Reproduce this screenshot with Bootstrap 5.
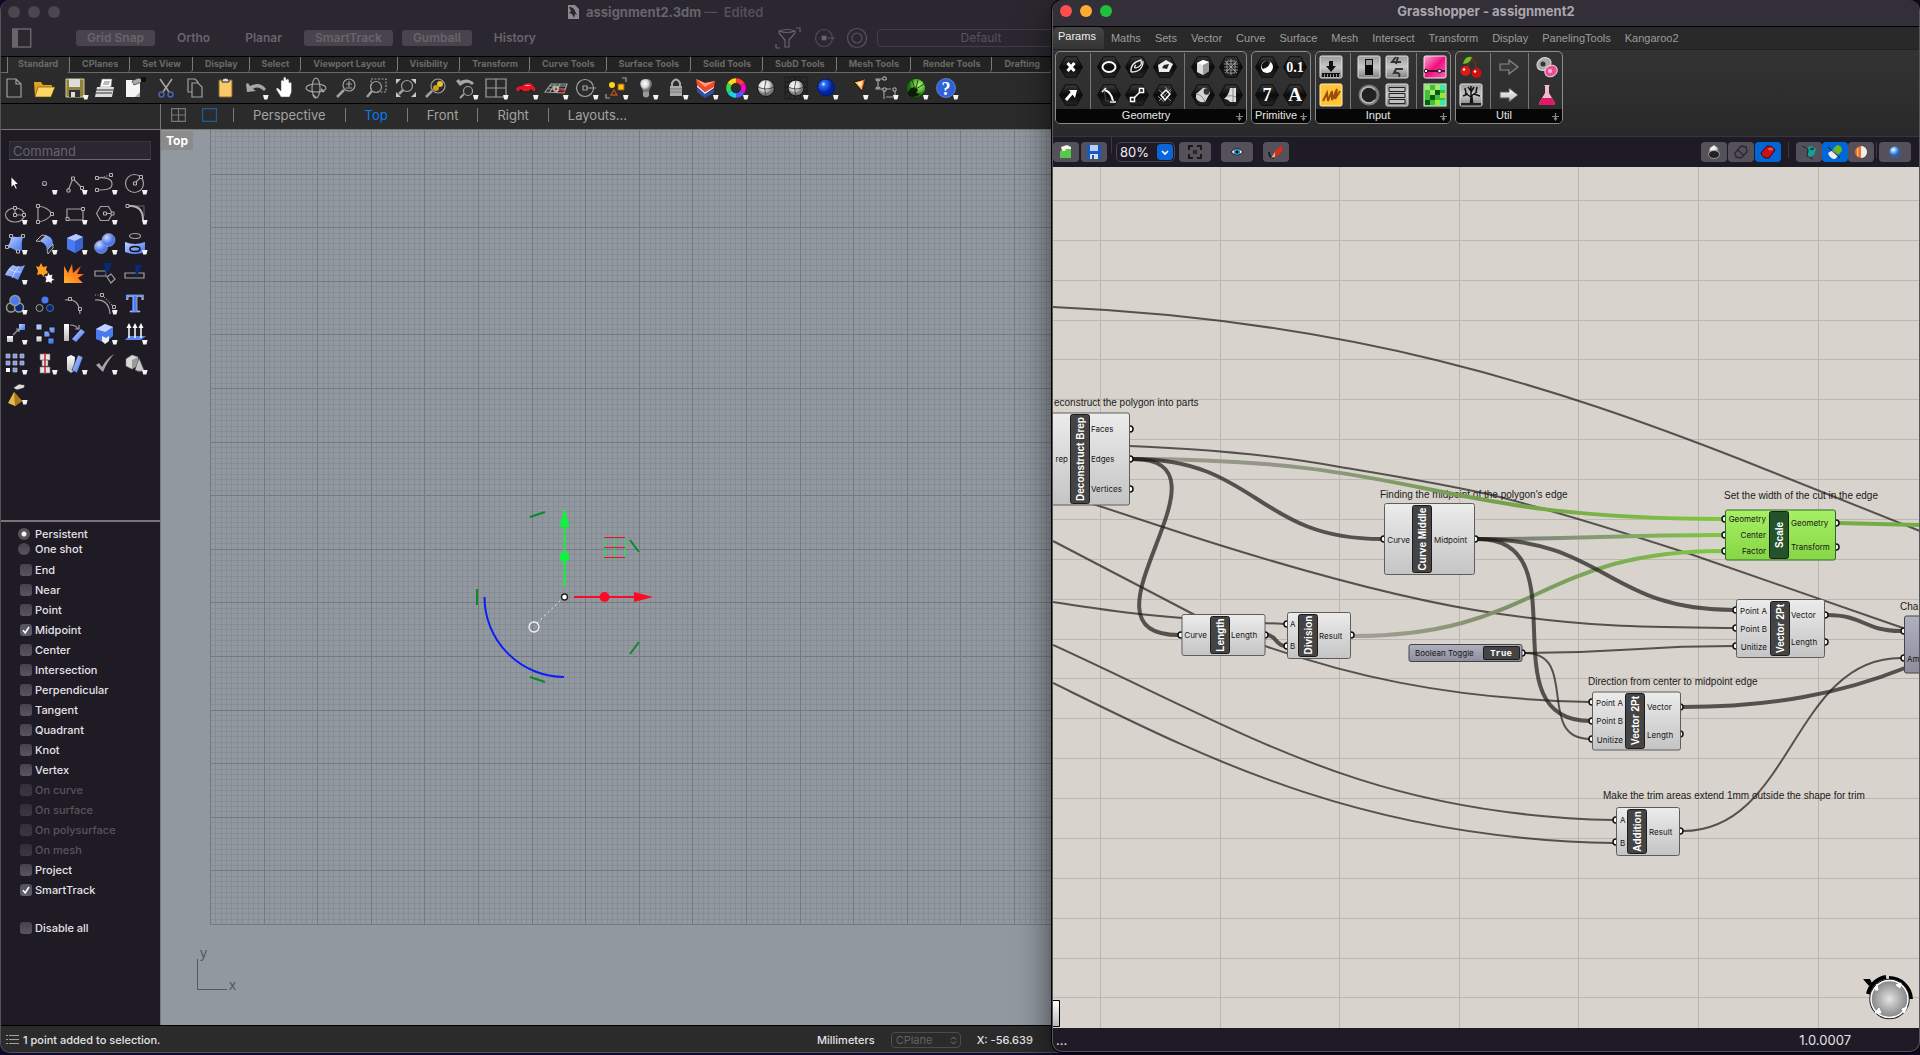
<!DOCTYPE html>
<html lang="en" data-bs-theme="dark">
<head>
<meta charset="utf-8">
<meta name="viewport" content="width=device-width, initial-scale=1">
<title>Grasshopper - assignment2</title>
<link href="https://cdn.jsdelivr.net/npm/bootstrap@5.3.0/dist/css/bootstrap.min.css" rel="stylesheet">
<style>
:root{--ui:Inter,"Noto Sans",sans-serif;--gh:"Liberation Sans",Arial,sans-serif}
body{background:#120a2c;font-family:var(--ui);font-size:12px;line-height:16px;color:#e4e2e6}
button,select,input{font-family:inherit}
.desk{height:100vh;min-height:700px}
.win{position:absolute;top:0;bottom:3px;border-radius:10px}
.win-rhino{left:0;width:56%;bottom:2px;border-left:1px solid #55535a;border-bottom:1px solid #55535a;background:#2b2b2b}
.win-gh{left:1052px;right:0;border:1px solid #57555c;border-top:0;background:#1f1b26;box-shadow:0 0 0 1px #000,0 12px 34px rgba(0,0,0,.62)}
.plain{background:none;border:0;padding:0;color:inherit;display:block}
svg{display:block;flex:none}
/* Rhino header */
.r-head{background:#2b2730;height:57px;border-bottom:1px solid #000;color:#67646c}
.r-title{height:24px;font-size:13px;font-weight:700}
.r-title .edited{font-weight:600;color:#53505a}
.lights{gap:8px;padding-left:7px}
.dot{width:12px;height:12px;border-radius:50%;background:#4b4750}
.dot.close-dot{background:#fe4f4b}
.dot.min-dot{background:#fdab33}
.dot.max-dot{background:#1fc13c}
.r-title .name{left:566px;gap:7px}
.r-bar{height:27px;padding-left:11px;font-size:12px;font-weight:600;gap:9px}
.side-btn{margin-right:35px}
.snap{height:16px;line-height:14px;padding:0 13px;border:0;border-radius:3px;background:none;color:#67646c;font-weight:600}
.snap.on{background:#47444d;padding:0 11px}
.pick{appearance:none;background:none;border:1px solid #413e47;border-radius:4px;color:#56535b;height:18px;font-size:12px;line-height:14px;padding:0 6px}
.pick-default{width:208px;text-align:center;text-align-last:center}
.r-icons{left:774px;gap:10px}
.r-icons .g{stroke:#67646c}
/* tool tabs */
.tabs{height:16px;background:#232323;font-size:9px;font-weight:700;line-height:14px;border-bottom:1px solid #6a6a6a;padding-left:6px}
.tabs a{color:#6a6a6a;text-decoration:none;padding:0 11px 0 12px;border-right:1px solid #7a7a7a;border-radius:0 0 3px 0;white-space:nowrap;height:15px}
.tabs a.on{background:#2c2c2c;height:16px;border-left:1px solid #7a7a7a;padding-left:10px}
.tools{height:31px;background:#2b2b2b;border-bottom:1px solid #000}
.tool{width:30px;height:30px;flex:none}
/* views */
.views{height:26px;border-bottom:1px solid #777;background:#2b2b2b}
.views-gap{width:159px}
.views-nav{border-left:1px solid #777;font-size:13px;color:#a3a3a3;padding-left:10px}
.views-nav a{color:inherit;text-decoration:none;padding:0 19px;line-height:14px;border-left:1px solid #7b7b7b;white-space:nowrap}
.views-nav a.on{color:#0a7cf0}
.views-nav a.on,.views-nav a.on+a{border-color:#7b7b7b}
.side{width:160px;background:#1f1b25;border-right:1px solid #777}
.cmd{height:19px;margin:11px 9px 8px 8px;background:#2a2731;border:1px solid #37343e;border-bottom-color:#6b6870;color:#ddd;font-size:13px;padding:0 3px;border-radius:0}
.cmd::placeholder{color:#65626a}
.palette{margin-left:-1px;height:354px;border-bottom:2px solid #77757a;align-content:flex-start}
.snaps{padding-top:4px;font-size:11px;font-weight:500}
.snaps .opt{padding-left:19px;gap:3px;height:20px}
.snaps .rad{padding-left:17px;gap:5px;height:15px}
.snaps .last{margin-top:18px}
.snaps input{appearance:none;width:12px;height:12px;margin:0;border-radius:3px;background:linear-gradient(#45424b,#58555e);flex:none}
.snaps input[type=radio]{border-radius:50%}
.snaps input[type=radio]:checked{background:radial-gradient(circle,#f4f4f4 0 2px,#55525b 3px)}
.snaps input[type=checkbox]:checked{background:url("data:image/svg+xml,%3Csvg xmlns='http://www.w3.org/2000/svg' viewBox='0 0 12 12'%3E%3Cpath d='M3 6.3L5.2 9 9 3' fill='none' stroke='white' stroke-width='1.6'/%3E%3C/svg%3E"),linear-gradient(#55525b,#62606a)}
.snaps .off{color:#57545c}
.snaps .off input{opacity:.5}
.vp{background:#9198a0}
.vp-name{top:1px;left:0;background:#8b8b8b;color:#fff;font-weight:700;font-size:12px;line-height:19px;padding:0 5px}
.r-status{height:27px;border-top:1px solid #000;background:#2b2b2b;font-size:11px;font-weight:500;padding:1px 0 0 5px}
.r-status .grp{position:absolute;left:816px;gap:16px}
.r-status .pick{width:70px;height:16px;font-size:11px;line-height:12px;border-color:#4c4c4c;color:#626262;padding:0 4px}
/* Grasshopper */
.g-title{height:27px;background:#332f38;border-bottom:1px solid #000;border-radius:10px 10px 0 0;font-size:13px;font-weight:700;color:#a9a7ad}
.g-title .lights{position:absolute;left:0}
.g-tabs{height:22px;background:#292929;font-family:var(--gh);font-size:11px;color:#9d9d9d}
.g-tabs a{color:inherit;text-decoration:none;padding:0 7px;line-height:22px;border-radius:6px 6px 0 0}
.g-tabs a.on{background:linear-gradient(#454545,#343434);color:#eee;padding:0 8px 0 5px;line-height:18px}
.ribbon{height:88px;background:linear-gradient(#333,#292929);border-top:1px solid #222;border-bottom:1px solid #38363c;padding:1px 2px;gap:4px}
.panel-box{height:73px;border:1px solid #8b8b8b;border-radius:5px;overflow:hidden;background:linear-gradient(#333,#2c2c2c)}
.panel-box .cells{height:57px;padding:1px 1px 0}
.panel-box .colm{width:28px}
.panel-box .rule{width:10px;background:linear-gradient(90deg,transparent 5px,#777 5px 6px,transparent 6px)}
.panel-box .cap{height:14px;background:#060606;font-family:var(--gh);font-size:11px;line-height:13px;color:#e6e6e6;text-align:center;padding-right:10px}
.panel-box .cap svg{right:2px;top:3px}
.g-bar{height:30px}
.gb{height:20px;width:26px;border-radius:4px;background:#54515a;display:flex;align-items:center;justify-content:center;border:0;padding:0}
.gb.wide{width:32px}
.gb.on{background:#0068d6}
.near-btns{gap:1px}
.left-btns{gap:2px}
.mid-btns{gap:10px}
.vr{width:1px;height:16px;background:#3b3842;opacity:1;margin:0 4px}
.vr.v-far{margin:0 7px}
.vr.v-near{margin:0 2px}
.zoomer{width:59px;height:20px;border:1px solid #46434c;border-radius:5px;margin-right:4px}
.zoomer select{appearance:none;background:none;border:0;color:#eee;font-size:13px;line-height:18px;padding:0 0 0 3px;width:57px;height:18px}
.zoomer svg{right:1px;top:1px}
.g-canvas{background:#d8d3cc}
.g-status{height:23px;font-size:13px;padding:0 68px 0 3px}
/* drawing classes */
.g{fill:none;stroke:#a0a0a0;stroke-width:1.2}
.sq{fill:#1f1b25;stroke:#b5b5b5;stroke-width:1}
.wire{fill:none;stroke:#1c1a18;stroke-opacity:.7;stroke-width:2}
.thick{stroke-width:4}
.note text{font-family:var(--gh);font-size:10px;fill:#1a1a1a}
.lab text{font-family:var(--ui);font-size:8px;fill:#161616}
.lab .e{text-anchor:end}
.pill text{font-family:var(--gh);font-weight:700;font-size:10px;fill:#fff;text-anchor:middle}
.pill .value{font-family:"Liberation Mono",monospace;font-size:9px}
.node-body rect{fill:url(#nodeFill);stroke:#5d5d5d;stroke-width:1}
.pill rect{fill:#444;stroke:#1c1c1c}
.pill .leaf{fill:#24522a}
.ports circle{fill:#fff;stroke:#111;stroke-width:1.5}
</style>
<script src="https://cdn.jsdelivr.net/npm/bootstrap@5.3.0/dist/js/bootstrap.bundle.min.js"></script>
</head>
<body>
<svg width="0" height="0" class="position-absolute" aria-hidden="true">
<defs>
<linearGradient id="nodeFill" x2="0" y2="1"><stop stop-color="#ececec"/><stop offset="1" stop-color="#c4c4c4"/></linearGradient>
<linearGradient id="greenFill" x2="0" y2="1"><stop stop-color="#a6f065"/><stop offset="1" stop-color="#87d645"/></linearGradient>
<linearGradient id="slateFill" x2="0" y2="1"><stop stop-color="#b0b0c0"/><stop offset="1" stop-color="#8c8c9c"/></linearGradient>
<linearGradient id="wireGreen" gradientUnits="userSpaceOnUse" x1="1133" x2="1723"><stop stop-color="#9c9a90"/><stop offset=".25" stop-color="#929588"/><stop offset=".6" stop-color="#74a04c"/><stop offset="1" stop-color="#7ec83f"/></linearGradient>
<linearGradient id="wireGreen2" gradientUnits="userSpaceOnUse" x1="1353" x2="1723"><stop stop-color="#a3a198"/><stop offset=".4" stop-color="#7f9068"/><stop offset="1" stop-color="#7ec83f"/></linearGradient>
<linearGradient id="wireGreen3" gradientUnits="userSpaceOnUse" x1="1478" x2="1723"><stop stop-color="#77756e"/><stop offset=".4" stop-color="#86947a"/><stop offset="1" stop-color="#7ec83f"/></linearGradient>
<linearGradient id="blue" x2="1" y2="1"><stop stop-color="#c3d3ff"/><stop offset="1" stop-color="#3c6ff0"/></linearGradient>
<linearGradient id="white" x2="0" y2="1"><stop stop-color="#fff"/><stop offset="1" stop-color="#b8b8b8"/></linearGradient>
<linearGradient id="steel" x2="0" y2="1"><stop stop-color="#9a9a9a"/><stop offset=".5" stop-color="#c8c8c8"/><stop offset="1" stop-color="#808080"/></linearGradient>
<linearGradient id="fire" x1="0" y1="1" x2="1" y2="0"><stop stop-color="#ffb32e"/><stop offset="1" stop-color="#ff4a10"/></linearGradient>
<linearGradient id="hexFill" x2="0" y2="1"><stop stop-color="#3b3b3b"/><stop offset=".5" stop-color="#0a0a0a"/><stop offset="1" stop-color="#262626"/></linearGradient>
<linearGradient id="pink" x2="1" y2="1"><stop stop-color="#ffa9d4"/><stop offset=".5" stop-color="#f0107c"/><stop offset="1" stop-color="#ff5fc0"/></linearGradient>
<radialGradient id="ballW" cx=".4" cy=".35"><stop stop-color="#fff"/><stop offset=".6" stop-color="#d8d8d8"/><stop offset="1" stop-color="#777"/></radialGradient>
<radialGradient id="ballB" cx=".35" cy=".3"><stop stop-color="#fff"/><stop offset=".25" stop-color="#2f73ff"/><stop offset="1" stop-color="#0022a0"/></radialGradient>
<radialGradient id="ballL" cx=".35" cy=".3"><stop stop-color="#fff"/><stop offset=".5" stop-color="#6fb3ff"/><stop offset="1" stop-color="#2b5fb0"/></radialGradient>
<radialGradient id="ballM" cx=".35" cy=".3"><stop stop-color="#c9d8ff"/><stop offset="1" stop-color="#4a78ee"/></radialGradient>
<radialGradient id="ballG" cx=".65" cy=".35"><stop stop-color="#b6f27a"/><stop offset=".7" stop-color="#4fae2c"/><stop offset="1" stop-color="#1d6a14"/></radialGradient>
<radialGradient id="knob"><stop stop-color="#e4e4e4"/><stop offset="1" stop-color="#808080"/></radialGradient>
<path id="dd" d="M22 22h5.6l-1.2 4.6h-3.2z" fill="#f2f2f2"/>
<path id="hex" d="M2.500 14L8.500 3.800H19.500L25.500 14L19.500 24.200H8.500z" fill="url(#hexFill)" stroke="#0a0a0a"/>
<rect id="tile" x="3" y="3" width="22" height="22" rx="1.500" fill="url(#steel)" stroke="#e4e4e4"/>
<path id="plus" d="M4.500 1v7M1 4.500h7M3 6l1.500 2L6 6" fill="none" stroke="#888" stroke-width="1.200"/>
</defs>
</svg>

<main class="desk position-relative overflow-hidden">

<!-- Rhino window -->
<section class="win win-rhino d-flex flex-column overflow-hidden">
<header class="r-head flex-shrink-0">
 <div class="r-title d-flex align-items-center position-relative">
  <div class="lights d-flex"><span class="dot"></span><span class="dot"></span><span class="dot"></span></div>
  <div class="name position-absolute d-flex align-items-center">
   <svg width="12" height="14" viewBox="0 0 12 14"><path d="M1 0h7l4 4v10H1z" fill="#8b898e"/><path d="M2 2c3 0 5 1 6 4l2 4-2-1-1 4-2-4-3-1 2-2z" fill="#2a272e"/></svg>
   <span class="text-nowrap">assignment2.3dm <span class="edited">—&nbsp; Edited</span></span>
  </div>
 </div>
 <div class="r-bar d-flex align-items-center position-relative">
  <button class="plain side-btn" aria-label="Toggle sidebar"><svg width="20" height="20" viewBox="0 0 20 20"><rect x=".7" y="1" width="18" height="18" fill="none" stroke="#67646c" stroke-width="1.500"/><path d="M1 1h5v18H1z" fill="#67646c"/></svg></button>
  <button class="snap on">Grid Snap</button><button class="snap">Ortho</button><button class="snap">Planar</button><button class="snap on">SmartTrack</button><button class="snap on">Gumball</button><button class="snap">History</button>
  <div class="r-icons position-absolute d-flex align-items-center">
   <svg width="28" height="24" viewBox="0 0 28 24" class="g"><path d="M4 5q8-3 16 0v2l-6 7v7h-4v-7L4 7zM4 5q8 3 16 0M21 2h4v4M1 18v4h4"/></svg>
   <svg width="22" height="22" viewBox="0 0 22 22" class="g" stroke-opacity=".6"><circle cx="11" cy="11" r="8.500"/><path d="M9 9h4v4H9z" fill="#67646c"/><path d="M11 11h11"/></svg>
   <svg width="22" height="22" viewBox="0 0 22 22" class="g" stroke-opacity=".7"><circle cx="12" cy="11" r="9.500"/><circle cx="12" cy="11" r="5"/></svg>
   <select class="pick pick-default" aria-label="Layer"><option>Default</option></select>
  </div>
 </div>
</header>
<nav class="tabs d-flex flex-shrink-0" aria-label="Toolbars">
<a class="on" href="#">Standard</a><a href="#">CPlanes</a><a href="#">Set View</a><a href="#">Display</a><a href="#">Select</a><a href="#">Viewport Layout</a><a href="#">Visibility</a><a href="#">Transform</a><a href="#">Curve Tools</a><a href="#">Surface Tools</a><a href="#">Solid Tools</a><a href="#">SubD Tools</a><a href="#">Mesh Tools</a><a href="#">Render Tools</a><a href="#">Drafting</a>
</nav>
<div class="tools d-flex flex-shrink-0">
<button class="plain tool" aria-label="New"><svg viewBox="0 0 30 30"><path class="g" d="M6 6h9l5 5v13H6zM15 6v5h5"/></svg></button>
<button class="plain tool" aria-label="Open"><svg viewBox="0 0 30 30"><path d="M3 9h7l2 3h9v4l-3 8H4z" fill="#e3a21c"/><path d="M7 14h17l-4 10H4z" fill="#ffd766" stroke="#5a3d00" stroke-width=".6"/></svg></button>
<button class="plain tool" aria-label="Save"><svg viewBox="0 0 30 30"><path d="M5 6h18v18H5z" fill="#8f8240" stroke="#e7dca0" stroke-width=".9"/><path d="M8 6h11v8H8z" fill="#ddd"/><path d="M8 17h11v7H8z" fill="#333"/><path d="M10 19h4v5h-4z" fill="#ddd"/><use href="#dd"/></svg></button>
<button class="plain tool" aria-label="Print"><svg viewBox="0 0 30 30"><path d="M11 6h10l-1 8H9z" fill="#fff" stroke="#777" stroke-width=".6"/><path d="M6 14h17l-2 10H4z" fill="#ddd"/><path d="M5 17h17M5 20h16" stroke="#333" stroke-width="1.200"/><path d="M13 9h6M12 11h6" stroke="#777"/></svg></button>
<button class="plain tool" aria-label="Properties"><svg viewBox="0 0 30 30"><path d="M5 7h14v17H5z" fill="#f5f5f5"/><path d="M11 8l6-3 4 1v3l-8 3z" fill="#aaa" stroke="#222" stroke-width=".6"/><path d="M20 4h5v5h-5z" fill="#111"/><path d="M14 24l5-5v5z" fill="#aaa"/></svg></button>
<button class="plain tool" aria-label="Cut"><svg viewBox="0 0 30 30"><path d="M9 6l9 13M21 6l-9 13" stroke="#aaa" stroke-width="1.500"/><g fill="none" stroke="#4b63b0" stroke-width="1.500"><circle cx="10.500" cy="21.500" r="2.500"/><circle cx="19.500" cy="21.500" r="2.500"/></g></svg></button>
<button class="plain tool" aria-label="Copy"><svg viewBox="0 0 30 30"><path class="g" d="M7 6h7l3 3v10H7z"/><path d="M11 10h6l4 4v10H11z" fill="#2b2b2b" stroke="#a0a0a0" stroke-width="1.200"/></svg></button>
<button class="plain tool" aria-label="Paste"><svg viewBox="0 0 30 30"><rect x="8" y="7" width="13" height="17" rx="1" fill="#f7c968" stroke="#8d6a22"/><path d="M11 9V7q3.500-4 7 0v2z" fill="#ddd" stroke="#222"/></svg></button>
<button class="plain tool" aria-label="Undo"><svg viewBox="0 0 30 30"><path d="M5 11l1 8 9-1-3-2q5-4 11 2l2-2q-6-8-16-3l-2-3z" fill="#a6a6a6"/><use href="#dd"/></svg></button>
<button class="plain tool" aria-label="Pan"><svg viewBox="0 0 30 30"><path d="M10 24l-5-8q1-2 3 0l2 2V8q1-2 2.500 0V5q1.500-2 2.500 0v2q1.500-2 3 0v3q1.500-1.500 2.500 0v9l-2 5z" fill="#fff" stroke="#555" stroke-width=".5"/></svg></button>
<button class="plain tool" aria-label="Rotate view"><svg viewBox="0 0 30 30" class="g"><ellipse cx="15" cy="15" rx="10" ry="4"/><ellipse cx="15" cy="15" rx="4" ry="10"/><path d="M20 16l3 3M12 22l3 3" stroke-width="2"/></svg></button>
<button class="plain tool" aria-label="Zoom dynamic"><svg viewBox="0 0 30 30" class="g"><circle cx="18" cy="12" r="6"/><path d="M13 17l-7 7" stroke-width="2.500"/><path d="M15 11h6M18 8v6M15 15h6"/></svg></button>
<button class="plain tool" aria-label="Zoom window"><svg viewBox="0 0 30 30" class="g"><path d="M10 6h15v13H10z" stroke-dasharray="2 1.500"/><circle cx="15" cy="14" r="5.500"/><path d="M11 18l-5 6" stroke-width="2.500"/></svg></button>
<button class="plain tool" aria-label="Zoom extents"><svg viewBox="0 0 30 30" class="g"><circle cx="16" cy="13" r="5.500"/><path d="M12 17l-4 4" stroke-width="2.500"/><path d="M5 6h5l-5 5zM25 6v5l-5-5zM25 24h-5l5-5zM5 24v-5l5 5z" fill="#c9c9c9" stroke="none"/></svg></button>
<button class="plain tool" aria-label="Zoom selected"><svg viewBox="0 0 30 30"><g class="g"><circle cx="17" cy="13" r="7"/><path d="M11 18l-6 6" stroke-width="2.500"/></g><circle cx="19" cy="11" r="3" fill="#e8c22e"/><circle cx="15" cy="15" r="3" fill="#c9a11a"/></svg></button>
<button class="plain tool" aria-label="Undo view"><svg viewBox="0 0 30 30"><path d="M5 8l4 5 3-2q5-3 9 1l2-2q-6-6-14-2L8 6z" fill="#a6a6a6"/><g class="g"><circle cx="17" cy="18" r="4.500"/><path d="M13 21l-4 4" stroke-width="2"/></g><use href="#dd"/></svg></button>
<button class="plain tool" aria-label="Four views"><svg viewBox="0 0 30 30"><path class="g" d="M5 6h20v18H5zM15 6v18M5 15h20"/><use href="#dd"/></svg></button>
<button class="plain tool" aria-label="Shade"><svg viewBox="0 0 30 30"><path d="M5 16q1-3 6-3 3-3 7-3 3 0 4 3 3 1 2 5H6z" fill="#e81423"/><path d="M13 13q4-2 7 0z" fill="#ffc4c4"/><circle cx="10" cy="18" r="1.700" fill="#222"/><circle cx="20" cy="18" r="1.700" fill="#222"/><use href="#dd"/></svg></button>
<button class="plain tool" aria-label="CPlane"><svg viewBox="0 0 30 30"><path class="g" stroke-width=".8" d="M4 19l6-8h16l-3 9zM9 19l5-8M15 20l4-9M6 16h18M8 13h17"/><path d="M15 15l-1-4" stroke="#2a2"/><path d="M15 16l9 2" stroke="#e11" stroke-width="1.500"/><path d="M13 14h4v4h-4z" fill="none" stroke="#eee"/><use href="#dd"/></svg></button>
<button class="plain tool" aria-label="Object snap"><svg viewBox="0 0 30 30"><g class="g"><circle cx="14" cy="15" r="8.500"/><path d="M12 13h4v4h-4zM16 15h9"/></g><use href="#dd"/></svg></button>
<button class="plain tool" aria-label="Select"><svg viewBox="0 0 30 30"><circle cx="11" cy="12" r="3" fill="#ffd21a"/><path d="M17 11h6v6h-6z" fill="#ffc21a" stroke="#965b00"/><path d="M10 22l3-5 3 5z" fill="none" stroke="#b5501a" stroke-width="1.300"/><path class="g" d="M21 5h4v4M5 21v4h4"/><use href="#dd"/></svg></button>
<button class="plain tool" aria-label="Show"><svg viewBox="0 0 30 30"><path d="M12 19q0-3-2-5-3-8 5-8t5 8q-2 2-2 5z" fill="url(#ballW)"/><path d="M12 19h6v4q-3 3-6 0z" fill="#999"/><use href="#dd"/></svg></button>
<button class="plain tool" aria-label="Lock"><svg viewBox="0 0 30 30"><path d="M11 14v-4q4-7 8 0v4" fill="none" stroke="#aaa" stroke-width="2"/><rect x="9" y="13" width="12" height="10" fill="#aaa"/><path d="M9 16h12M9 19h12" stroke="#777"/><use href="#dd"/></svg></button>
<button class="plain tool" aria-label="Layers"><svg viewBox="0 0 30 30"><path d="M6 15l9 6 8-5v4l-9 5-8-6z" fill="#2c50a8"/><path d="M6 12l8 7 9-6v2l-9 6-8-7z" fill="#e8eefc"/><path d="M5 6l9 4 10-2-1 6-9 5-8-7z" fill="#f04a28"/><path d="M5 6l9 4 10-2-10 6z" fill="#ff9a80"/><use href="#dd"/></svg></button>
<button class="plain tool" aria-label="Colour"><svg viewBox="0 0 30 30"><g fill="none" stroke-width="4.500"><path d="M15 7.500a7.500 7.500 0 0 1 6.500 3.700" stroke="#ff3b2f"/><path d="M21.500 11.200a7.500 7.500 0 0 1 0 7.600" stroke="#f0c"/><path d="M21.500 18.800A7.500 7.500 0 0 1 15 22.500" stroke="#4a5cff"/><path d="M15 22.500a7.500 7.500 0 0 1-6.500-3.700" stroke="#1ad0f0"/><path d="M8.500 18.800a7.500 7.500 0 0 1 0-7.600" stroke="#2be04a"/><path d="M8.500 11.200A7.500 7.500 0 0 1 15 7.500" stroke="#ffd51a"/></g><use href="#dd"/></svg></button>
<button class="plain tool" aria-label="Shaded"><svg viewBox="0 0 30 30"><circle cx="15" cy="15" r="8.500" fill="url(#ballW)" stroke="#111"/><path d="M15 7q-3 8 0 16M7 14q8 4 16 0" fill="none" stroke="#333" stroke-width=".8"/></svg></button>
<button class="plain tool" aria-label="Render view"><svg viewBox="0 0 30 30"><path d="M4 4h22v22H4zM4 9h22M4 14h22M4 19h22M9 4v22M14 4v22M19 4v22" fill="none" stroke="#161616" stroke-width=".8"/><circle cx="15" cy="15" r="8" fill="url(#ballW)" stroke="#111"/><path d="M15 7q-3 8 0 16M7 14q8 4 16 0" fill="none" stroke="#333" stroke-width=".8"/><use href="#dd"/></svg></button>
<button class="plain tool" aria-label="Render"><svg viewBox="0 0 30 30"><circle cx="15" cy="14.500" r="8.500" fill="url(#ballB)" stroke="#001a66"/><use href="#dd"/></svg></button>
<button class="plain tool" aria-label="Spotlight"><svg viewBox="0 0 30 30"><path d="M13 9l11-3-3 12z" fill="#ffb04a" stroke="#111"/><path d="M16 10l6-2-2 6z" fill="#ffe9c0"/><path d="M22 7l2-1-3 12z" fill="#f0601a"/><use href="#dd"/></svg></button>
<button class="plain tool" aria-label="Dimension"><svg viewBox="0 0 30 30"><path class="g" d="M4 6h6M7 6v10M4 16h6M10 6h6M10 16h10M13 18v8M24 18v8M15 24h7M5 8l2-2 2 2M5 14l2 2 2-2"/><path class="sq" d="M12 4h3v3h-3zM12 15h3v3h-3zM22 15h3v3h-3z"/><use href="#dd"/></svg></button>
<button class="plain tool" aria-label="Grasshopper"><svg viewBox="0 0 30 30"><circle cx="15" cy="15" r="9.500" fill="url(#ballG)" stroke="#0f3a08"/><path d="M7 19l3-4 4-1 3 3-2 3 4 1-3 2-5 1-4-2z" fill="#0a1a06"/><path d="M14 16L11 7M15 16l8-5M15 15l2-8" stroke="#1a4a0c" fill="none"/><use href="#dd"/></svg></button>
<button class="plain tool" aria-label="Help"><svg viewBox="0 0 30 30"><circle cx="15" cy="15" r="9.500" fill="#2f62d8" stroke="#7ea2f5" stroke-width=".6"/><text x="15" y="21.500" text-anchor="middle" font-family="Liberation Serif,serif" font-weight="700" font-size="18" fill="#fff">?</text><use href="#dd"/></svg></button>
</div>
<div class="d-flex flex-shrink-0 views">
 <div class="flex-shrink-0 views-gap"></div>
 <nav class="views-nav d-flex align-items-center flex-fill pb-1" aria-label="Views">
  <button class="plain me-3" aria-label="All views"><svg width="15" height="14" viewBox="0 0 15 14" class="g"><path d="M.6.6h13.800v12.800H.6zM7.500 0v14M0 7h15" stroke="#777"/></svg></button>
  <button class="plain me-3" aria-label="Single view"><svg width="15" height="14" viewBox="0 0 15 14"><path d="M.6.6h13.800v12.800H.6z" fill="none" stroke="#1f5c9c" stroke-width="1.200"/></svg></button>
  <a href="#">Perspective</a><a class="on" href="#">Top</a><a href="#">Front</a><a href="#">Right</a><a href="#">Layouts...</a>
 </nav>
</div>
<div class="d-flex flex-fill overflow-hidden">
<aside class="side d-flex flex-column flex-shrink-0">
<input class="cmd" type="text" placeholder="Command" aria-label="Command">
<div class="palette d-flex flex-wrap flex-shrink-0">
<button class="plain tool" aria-label="Pointer"><svg viewBox="0 0 30 30"><path d="M11 8.500v11l2.600-2.200 2 4 1.800-.8-2-4h3.400z" fill="#fff" stroke="#000" stroke-width=".8"/></svg></button>
<button class="plain tool" aria-label="Point"><svg viewBox="0 0 30 30"><circle class="g" cx="14.500" cy="15.500" r="2"/><use href="#dd"/></svg></button>
<button class="plain tool" aria-label="Polyline"><svg viewBox="0 0 30 30"><path class="g" d="M8 22.500l5-12 9 9.500"/><path class="sq" d="M7 21h3v3H7zM11.500 9h3v3h-3zM20.500 18.500h3v3h-3z"/><use href="#dd"/></svg></button>
<button class="plain tool" aria-label="Curve"><svg viewBox="0 0 30 30"><path class="g" d="M7 10c7-1 15 0 15 6s-8 6-15 6"/><path class="g" stroke-dasharray="1 1.500" d="M9 10L21 7"/><path class="sq" d="M5.500 8.500h3v3h-3zM19.500 5.500h3v3h-3zM5.500 20.500h3v3h-3z"/><use href="#dd"/></svg></button>
<button class="plain tool" aria-label="Circle"><svg viewBox="0 0 30 30"><circle class="g" cx="14.500" cy="15.500" r="9"/><path class="g" d="M15 15l6-6"/><path class="sq" d="M13.500 14h3v3h-3zM19.500 7.500h3v3h-3z"/><use href="#dd"/></svg></button>
<button class="plain tool" aria-label="Ellipse"><svg viewBox="0 0 30 30"><ellipse class="g" cx="15" cy="17" rx="9.500" ry="7"/><path class="g" d="M15 10v7h9"/><path class="sq" d="M13.500 8.500h3v3h-3zM13.500 15.500h3v3h-3zM22.500 15.500h3v3h-3z"/><use href="#dd"/></svg></button>
<button class="plain tool" aria-label="Arc"><svg viewBox="0 0 30 30"><path class="g" d="M8 8q10 1 14 8-5 7-14 8z"/><path class="sq" d="M6.500 6.500h3v3h-3zM6.500 22.500h3v3h-3zM20.500 14.500h3v3h-3z"/><use href="#dd"/></svg></button>
<button class="plain tool" aria-label="Rectangle"><svg viewBox="0 0 30 30"><path class="g" d="M7 11h16v11H7z"/><path class="sq" d="M6 19.500h3v3H6zM21.500 9.500h3v3h-3z"/><use href="#dd"/></svg></button>
<button class="plain tool" aria-label="Polygon"><svg viewBox="0 0 30 30"><path class="g" d="M6.500 15.500l4-7h8l4 7-4 7h-8zM15 15.500h7"/><path class="sq" d="M13.500 14h3v3h-3zM21 14h3v3h-3z"/><use href="#dd"/></svg></button>
<button class="plain tool" aria-label="Fillet"><svg viewBox="0 0 30 30"><path d="M13 8h11v10" stroke="#66636b" fill="none"/><path d="M8 8h4q11 1 11 14" fill="none" stroke="#b0b0b0" stroke-width="2"/><path class="sq" d="M6 6.500h3v3H6z"/><use href="#dd"/></svg></button>
<button class="plain tool" aria-label="Surface"><svg viewBox="0 0 30 30"><path d="M11 8q6 2 12 0-2 7-1 14l-4 2q-5-4-11-5 4-5 4-11z" fill="url(#blue)"/><path class="sq" d="M9.500 6.500h3v3h-3zM21.500 6.500h3v3h-3zM5.500 17.500h3v3h-3zM16.500 22h3v3h-3z"/><use href="#dd"/></svg></button>
<button class="plain tool" aria-label="Sweep"><svg viewBox="0 0 30 30"><path d="M12 7q11 0 11 9l-6 6q-1-9-11-9z" fill="url(#blue)"/><path d="M12 7l4 .5-6 6-4-.5zM17 22l6-6v4l-5 6z" fill="#2b2b2b" stroke="#ccc" stroke-width=".8"/><use href="#dd"/></svg></button>
<button class="plain tool" aria-label="Box"><svg viewBox="0 0 30 30"><path d="M7 10l9-4 7 3v11l-8 5-8-4z" fill="#4a7af0"/><path d="M7 10l9-4 7 3-8 4z" fill="#b7caff"/><path d="M15 13l8-4v11l-8 5z" fill="#3a62d0"/><use href="#dd"/></svg></button>
<button class="plain tool" aria-label="Boolean"><svg viewBox="0 0 30 30"><circle cx="11" cy="19" r="6.500" fill="url(#ballM)" stroke="#aab" stroke-width=".6"/><circle cx="18.500" cy="12" r="6.500" fill="url(#ballM)" stroke="#aab" stroke-width=".6"/><use href="#dd"/></svg></button>
<button class="plain tool" aria-label="Project"><svg viewBox="0 0 30 30"><ellipse class="g" cx="15" cy="8" rx="5.500" ry="2.500"/><path d="M5 14q10 4 20 0v10q-10 4-20 0z" fill="url(#blue)"/><ellipse cx="15" cy="21" rx="5" ry="2.500" fill="none" stroke="#111" stroke-width="1.500"/><use href="#dd"/></svg></button>
<button class="plain tool" aria-label="Mesh"><svg viewBox="0 0 30 30"><path d="M5 17q3-7 8-10 6 3 12 0-4 9-7 15-6-4-13-5z" fill="url(#blue)"/><path d="M9 11q6 4 12 3M12 20q2-6 7-12" stroke="#dfe8ff" fill="none" stroke-width=".7"/><use href="#dd"/></svg></button>
<button class="plain tool" aria-label="Join"><svg viewBox="0 0 30 30"><path d="M6 8l3 1 2-4 2 4 4-1-1 4 3 3-4 1-1 3-3-3-4 1 1-4z" fill="#ff9d1c"/><path d="M14 17l3 1 1-4 2 3 3-1-1 4 3 2-3 1 0 3-3-2-4 1 1-4z" fill="#fff" stroke="#1f1b25" stroke-width=".8"/></svg></button>
<button class="plain tool" aria-label="Explode"><svg viewBox="0 0 30 30"><path d="M4 25V8l4 7 4-9 1 9 8-7-4 8 7 0-6 4 5 5z" fill="url(#fire)"/></svg></button>
<button class="plain tool" aria-label="Trim"><svg viewBox="0 0 30 30"><path class="g" d="M5 13h11v5H5zM17 19l4-3 4 5-4 4z"/><path d="M14 5h8l-6 13z" fill="#052a78"/></svg></button>
<button class="plain tool" aria-label="Split"><svg viewBox="0 0 30 30"><path class="g" d="M5 15h19v5H5z"/><path d="M15 7h7l-6 13z" fill="#052a78"/></svg></button>
<button class="plain tool" aria-label="Group"><svg viewBox="0 0 30 30"><circle cx="11" cy="19.500" r="4.500" fill="#222" stroke="#999" stroke-width="1.500"/><circle cx="19" cy="19.500" r="4.500" fill="#062a78" stroke="#999" stroke-width="1.500"/><circle cx="15" cy="12.500" r="5" fill="#4a7af0" stroke="#999" stroke-width="1.500"/><use href="#dd"/></svg></button>
<button class="plain tool" aria-label="Ungroup"><svg viewBox="0 0 30 30"><circle cx="9.500" cy="20" r="3.500" fill="#222" stroke="#999"/><circle cx="20" cy="20" r="3.500" fill="#062a78" stroke="#55679a"/><circle cx="15" cy="12" r="3.500" fill="#4a7af0"/></svg></button>
<button class="plain tool" aria-label="Edit points"><svg viewBox="0 0 30 30"><path class="g" d="M5 12q14-3 15 14"/><path class="sq" d="M8.500 9.500h3v3h-3zM18.500 19.500h3v3h-3z"/></svg></button>
<button class="plain tool" aria-label="Control points"><svg viewBox="0 0 30 30"><path class="g" d="M5 12q14-1 15 14"/><path class="g" stroke-dasharray="1 1.500" d="M5 7h7l11 11"/><path class="sq" d="M10.500 5.500h3v3h-3zM22.500 17.500h3v3h-3z"/><use href="#dd"/></svg></button>
<button class="plain tool" aria-label="Text"><svg viewBox="0 0 30 30"><text x="15" y="24" text-anchor="middle" font-family="Liberation Serif,serif" font-weight="700" font-size="26" fill="#4a80f2" stroke="#c5d4ff" stroke-width=".6">T</text></svg></button>
<button class="plain tool" aria-label="Move"><svg viewBox="0 0 30 30"><path d="M7 18h6v6H7z" fill="url(#white)"/><path d="M19 6h6v6h-6z" fill="url(#blue)"/><path class="g" d="M13 17l6-6M16 11h3v3"/><use href="#dd"/></svg></button>
<button class="plain tool" aria-label="Copy objects"><svg viewBox="0 0 30 30"><g fill="url(#blue)" stroke="#111" stroke-width=".8"><path d="M6 6h6v6H6zM19 9h6v6h-6zM14 13h6v6h-6zM18 20h6v6h-6z"/><path d="M6 18h6v6H6z" fill="url(#white)"/></g></svg></button>
<button class="plain tool" aria-label="Rotate"><svg viewBox="0 0 30 30"><path d="M4 6h5v17H4z" fill="url(#white)"/><path d="M12 21l9-10 4 3-9 10z" fill="url(#blue)"/><path class="g" d="M10 7q6 0 8 4M15 11h4V7"/></svg></button>
<button class="plain tool" aria-label="Cap"><svg viewBox="0 0 30 30"><path d="M6 11l9-5 8 3v9l-8 7-9-4z" fill="#4a7af0"/><path d="M6 11l9-5 8 3-8 5z" fill="#c3d3ff"/><path d="M12 18l4 2 3-2v5l-4 3-3-3z" fill="#eee"/><use href="#dd"/></svg></button>
<button class="plain tool" aria-label="Extrude"><svg viewBox="0 0 30 30"><path d="M5 22l4-4h17l-5 4z" fill="#5b86f5"/><path d="M9 20V8M15 20V8M21 20V8" stroke="#fff" stroke-width="1.500"/><path d="M6.500 10L9 5l2.500 5zM12.500 10L15 5l2.500 5zM18.500 10L21 5l2.500 5z" fill="#fff"/><use href="#dd"/></svg></button>
<button class="plain tool" aria-label="Array"><svg viewBox="0 0 30 30"><path d="M6 6h4v4H6zM13 6h4v4h-4zM20 6h4v4h-4zM6 13h4v4H6zM13 13h4v4h-4zM20 13h4v4h-4zM13 20h4v4h-4z" fill="#7d9cf0" stroke="#ccc" stroke-width=".6"/><path d="M6 20h4v4H6z" fill="#fff"/><use href="#dd"/></svg></button>
<button class="plain tool" aria-label="Align"><svg viewBox="0 0 30 30"><path d="M10 6h10v6H10zM12 12h6v6h-6zM10 19h10v6H10z" fill="#e4e4e4" stroke="#777" stroke-width=".6"/><path d="M15 5v21" stroke="#d01c2c" stroke-width="1.500"/><use href="#dd"/></svg></button>
<button class="plain tool" aria-label="Bend"><svg viewBox="0 0 30 30"><path d="M7 9l4-2 4 2-1 14-3 2-4-3z" fill="url(#white)"/><path d="M18 7l5 2-6 16-5-3z" fill="url(#blue)" stroke="#222" stroke-width=".6"/><use href="#dd"/></svg></button>
<button class="plain tool" aria-label="Check"><svg viewBox="0 0 30 30"><path d="M6 17l3-2 3 4Q17 10 24 6q-7 8-11 18z" fill="#a4a4a4"/><use href="#dd"/></svg></button>
<button class="plain tool" aria-label="Primitives"><svg viewBox="0 0 30 30"><path d="M6 11l6-4 6 2v8l-6 4-6-3z" fill="#d8d8d8" stroke="#888" stroke-width=".5"/><path d="M12 12l6-3v8l-6 4z" fill="#9a9a9a"/><path d="M19 10l5 12q-4 3-9 0z" fill="#c6c6c6" stroke="#444" stroke-width=".5"/><use href="#dd"/></svg></button>
<button class="plain tool" aria-label="Pyramid"><svg viewBox="0 0 30 30"><path d="M14 14l8 9-7 5-7-3z" fill="#e4b84a"/><path d="M14 14l8 9-7 5z" fill="#a87a1c"/><path d="M13 10l6-4 6 1-1 3-7 2z" fill="#ddd" stroke="#111" stroke-width=".6"/><use href="#dd"/></svg></button>
</div>
<form class="snaps">
<label class="rad d-flex align-items-center"><input type="radio" name="m" checked>Persistent</label>
<label class="rad d-flex align-items-center mb-1"><input type="radio" name="m">One shot</label>
<label class="opt d-flex align-items-center"><input type="checkbox">End</label>
<label class="opt d-flex align-items-center"><input type="checkbox">Near</label>
<label class="opt d-flex align-items-center"><input type="checkbox">Point</label>
<label class="opt d-flex align-items-center"><input type="checkbox" checked>Midpoint</label>
<label class="opt d-flex align-items-center"><input type="checkbox">Center</label>
<label class="opt d-flex align-items-center"><input type="checkbox">Intersection</label>
<label class="opt d-flex align-items-center"><input type="checkbox">Perpendicular</label>
<label class="opt d-flex align-items-center"><input type="checkbox">Tangent</label>
<label class="opt d-flex align-items-center"><input type="checkbox">Quadrant</label>
<label class="opt d-flex align-items-center"><input type="checkbox">Knot</label>
<label class="opt d-flex align-items-center"><input type="checkbox">Vertex</label>
<label class="opt off d-flex align-items-center"><input type="checkbox" disabled>On curve</label>
<label class="opt off d-flex align-items-center"><input type="checkbox" disabled>On surface</label>
<label class="opt off d-flex align-items-center"><input type="checkbox" disabled>On polysurface</label>
<label class="opt off d-flex align-items-center"><input type="checkbox" disabled>On mesh</label>
<label class="opt d-flex align-items-center"><input type="checkbox">Project</label>
<label class="opt d-flex align-items-center"><input type="checkbox" checked>SmartTrack</label>
<label class="opt last d-flex align-items-center"><input type="checkbox">Disable all</label>
</form>
</aside>
<div class="vp flex-fill position-relative overflow-hidden">
 <svg class="position-absolute top-0 start-0" width="915" height="895" viewBox="161 130 915 895">
  <path id="minor" stroke="#868d95" fill="none"/><path id="major" stroke="#757a82" fill="none"/>
  <g stroke="#0a8a26" stroke-width="2"><path d="M530 517l15-5M630 540l9 12M477 589v16M630 654l9-12M530 677l15 5"/></g>
  <path d="M604.500 537v20M614.500 537v20M624.500 537v20" stroke="#0bf53c"/><path d="M604 537.500h21M604 547.500h21M604 557.500h21" stroke="#e8102c"/>
  <path d="M484.500 597A80 80 0 0 0 564 677" fill="none" stroke="#0a20f5" stroke-width="2"/>
  <path d="M564.500 587v-62" stroke="#0bf53c" stroke-width="2"/><path d="M564.500 508l5 19h-10z" fill="#0bf53c"/><circle cx="564.500" cy="557" r="5" fill="#0bf53c"/>
  <path d="M574 597h62" stroke="#ff0a24" stroke-width="2"/><path d="M653 597l-19 5v-10z" fill="#ff0a24"/><circle cx="604.500" cy="597" r="5" fill="#ff0a24"/>
  <path d="M537 623l25-24" stroke="#f2f2f2" stroke-dasharray="2 3"/><circle cx="534" cy="627" r="5" fill="none" stroke="#f2f2f2" stroke-width="1.300"/><circle cx="564.500" cy="597" r="3" fill="#fff" stroke="#222" stroke-width="1.400"/>
  <path d="M197.500 959v30.500H227" fill="none" stroke="#55575a"/>
  <g font-family="Liberation Sans,Arial,sans-serif" font-size="14" fill="#55575a"><text x="200" y="958">y</text><text x="229" y="990">x</text></g>
 </svg>
 <span class="vp-name position-absolute">Top</span>
</div>
</div>
<footer class="r-status d-flex align-items-center flex-shrink-0 position-relative">
 <svg width="13" height="11" viewBox="0 0 13 11"><path d="M0 1.500h2M3 1.500h10M0 5.500h2M3 5.500h10M0 9.500h2M3 9.500h10" stroke="#a0a0a0"/></svg>
 <span class="ms-1 text-nowrap">1 point added to selection.</span>
 <div class="grp d-flex align-items-center"><span>Millimeters</span>
  <div class="position-relative"><select class="pick d-block" aria-label="Coordinate system"><option>CPlane</option></select><svg class="position-absolute top-0 end-0 mt-1 me-1" width="7" height="9" viewBox="0 0 7 9"><path d="M1 3.500l2.500-2.500L6 3.500M1 5.500L3.500 8 6 5.500" fill="none" stroke="#777"/></svg></div>
  <span class="text-nowrap">X: -56.639</span></div>
</footer>
</section>

<!-- Grasshopper window -->
<section class="win win-gh d-flex flex-column overflow-hidden">
<header class="g-title d-flex align-items-center justify-content-center position-relative flex-shrink-0 pb-1">
 <div class="lights d-flex"><span class="dot close-dot"></span><span class="dot min-dot"></span><span class="dot max-dot"></span></div>
 <span>Grasshopper - assignment2</span>
</header>
<nav class="g-tabs d-flex flex-shrink-0" aria-label="Components">
<a class="on" href="#">Params</a><a href="#">Maths</a><a href="#">Sets</a><a href="#">Vector</a><a href="#">Curve</a><a href="#">Surface</a><a href="#">Mesh</a><a href="#">Intersect</a><a href="#">Transform</a><a href="#">Display</a><a href="#">PanelingTools</a><a href="#">Kangaroo2</a>
</nav>
<div class="ribbon d-flex flex-shrink-0">
 <div class="panel-box"><div class="cells d-flex">
  <div class="colm"><button class="plain" aria-label="Point"><svg width="28" height="28"><use href="#hex"/><path d="M10.500 10l7 8M17.500 10l-7 8" stroke="#fff" stroke-width="3"/></svg></button><button class="plain" aria-label="Vector"><svg width="28" height="28"><use href="#hex"/><path d="M9 19l6-7" stroke="#fff" stroke-width="3"/><path d="M12 9h8l-2 8z" fill="#fff"/></svg></button></div>
  <div class="rule"></div>
  <div class="colm"><button class="plain" aria-label="Circle"><svg width="28" height="28"><use href="#hex"/><ellipse cx="14" cy="14" rx="6.500" ry="5" fill="none" stroke="#fff" stroke-width="2"/></svg></button><button class="plain" aria-label="Arc"><svg width="28" height="28"><use href="#hex"/><path d="M9 9q7 1 9 11" fill="none" stroke="#fff" stroke-width="2"/><path d="M7 11l4-4M15 21h6" stroke="#fff" stroke-width="1.500"/><path d="M9 9l2 11h7" fill="none" stroke="#555" stroke-width=".8"/></svg></button></div>
  <div class="colm"><button class="plain" aria-label="Curve"><svg width="28" height="28"><use href="#hex"/><path d="M8 19q-1-9 10-12 2 6-5 8-3 0 0-3M8 19q12 0 12-11" fill="none" stroke="#e8e8e8" stroke-width="1.300"/></svg></button><button class="plain" aria-label="Line"><svg width="28" height="28"><use href="#hex"/><path d="M10 18l8-8" stroke="#fff" stroke-width="1.500"/><path d="M7.500 16.500h4v4h-4zM16.500 7.500h4v4h-4z" fill="#111" stroke="#fff" stroke-width="1.500"/></svg></button></div>
  <div class="colm"><button class="plain" aria-label="Plane"><svg width="28" height="28"><use href="#hex"/><path d="M7 12l8-5 7 4-4 8H8z" fill="#eee"/><path d="M11 15l2-3 5-1-2 5z" fill="#222"/></svg></button><button class="plain" aria-label="Rectangle"><svg width="28" height="28"><use href="#hex"/><path d="M8 9l12 11M20 8L8 20M14 6l6 5M7 15l6 6" fill="none" stroke="#888"/><path d="M10 14l5-5 4 4-5 6z" fill="none" stroke="#fff" stroke-width="1.500"/></svg></button></div>
  <div class="rule"></div>
  <div class="colm"><button class="plain" aria-label="Box"><svg width="28" height="28"><use href="#hex"/><path d="M8 10l6-3 6 2v9l-6 4-6-3z" fill="#ddd"/><path d="M8 10l6-3 6 2-6 3z" fill="#fff"/><path d="M14 12l6-3v9l-6 4z" fill="#999"/></svg></button><button class="plain" aria-label="Brep"><svg width="28" height="28"><use href="#hex"/><path d="M7 13l7-6q5-1 7 5l-5 9q-7 1-9-4z" fill="#d4d4d4"/><ellipse cx="17.500" cy="10.500" rx="2.800" ry="3.200" fill="#333"/><path d="M7 13q7 1 9 8" stroke="#888" fill="none"/></svg></button></div>
  <div class="colm"><button class="plain" aria-label="Mesh"><svg width="28" height="28"><use href="#hex"/><path d="M14 6v16M7 14h14M8 8l12 12M20 8L8 20M10 8h8v12h-8zM7 11h14M7 17h14" fill="none" stroke="#bbb" stroke-width=".7"/></svg></button><button class="plain" aria-label="Surface"><svg width="28" height="28"><use href="#hex"/><path d="M13 7h6v14h-6q-2-3-6-3 5-4 6-11z" fill="#ddd"/><path d="M16 7v14M10 15q5-1 9 1" stroke="#777" fill="none" stroke-width=".8"/></svg></button></div>
 </div><div class="cap position-relative">Geometry<svg class="position-absolute" width="9" height="9"><use href="#plus"/></svg></div></div>
 <div class="panel-box"><div class="cells d-flex">
  <div class="colm"><button class="plain" aria-label="Boolean"><svg width="28" height="28"><use href="#hex"/><circle cx="14" cy="14" r="6" fill="#fff"/><path d="M10 10a5 5 0 0 1 7-1q0 5-7 7-3-3 0-6z" fill="#111"/></svg></button><button class="plain" aria-label="Integer"><svg width="28" height="28"><use href="#hex"/><text x="14" y="20" text-anchor="middle" font-family="Liberation Serif,serif" font-weight="700" font-size="18" fill="#fff">7</text></svg></button></div>
  <div class="colm"><button class="plain" aria-label="Number"><svg width="28" height="28"><use href="#hex"/><text x="14" y="19" text-anchor="middle" font-family="Liberation Serif,serif" font-weight="700" font-size="14" fill="#fff">0.1</text></svg></button><button class="plain" aria-label="Text"><svg width="28" height="28"><use href="#hex"/><text x="14" y="20" text-anchor="middle" font-family="Liberation Serif,serif" font-weight="700" font-size="19" fill="#fff">A</text></svg></button></div>
 </div><div class="cap position-relative">Primitive<svg class="position-absolute" width="9" height="9"><use href="#plus"/></svg></div></div>
 <div class="panel-box"><div class="cells d-flex">
  <div class="colm"><button class="plain" aria-label="Button"><svg width="28" height="28"><use href="#tile"/><path d="M14 8v6" stroke="#111" stroke-width="4"/><path d="M9 13h10l-5 6z" fill="#111"/><path d="M5 20.500h18" stroke="#111"/><path d="M5 22.500h18" stroke="#111" stroke-width="3" stroke-dasharray="2 1"/></svg></button><button class="plain" aria-label="Graph"><svg width="28" height="28"><rect x="3" y="3" width="22" height="22" rx="1.500" fill="#ffc43a" stroke="#fff0b8"/><path d="M6 20l4-8 1 8 4-10 0 9 5-11-2 10 5-8" fill="none" stroke="#9a4e08" stroke-width="2"/></svg></button></div>
  <div class="rule"></div>
  <div class="colm"><button class="plain" aria-label="Toggle"><svg width="28" height="28"><use href="#tile"/><path d="M10 6h8v16h-8z" fill="#0a0a0a"/><path d="M11 7h6v5h-6z" fill="#999"/></svg></button><button class="plain" aria-label="Knob"><svg width="28" height="28"><circle cx="14" cy="14" r="9" fill="#222" stroke="#777" stroke-width="3"/><path d="M20 9a8 8 0 1 0 0 10" fill="none" stroke="#bbb" stroke-width="1.500"/></svg></button></div>
  <div class="colm"><button class="plain" aria-label="Slider"><svg width="28" height="28"><use href="#tile"/><path d="M13 4l-4 5h9M15 4l-2 7M20 16h-7l-2 4q7-1 5 4" fill="none" stroke="#333" stroke-width="2"/></svg></button><button class="plain" aria-label="List"><svg width="28" height="28"><use href="#tile"/><path d="M6 6.500h16v4H6zM6 12.500h16v4H6zM6 18.500h16v4H6z" fill="#c0c0c0" stroke="#222"/></svg></button></div>
  <div class="rule"></div>
  <div class="colm"><button class="plain" aria-label="Gradient"><svg width="28" height="28"><rect x="3" y="3" width="22" height="22" rx="1.500" fill="url(#pink)" stroke="#eee"/><path d="M4 18h20" stroke="#111" stroke-width="1.300"/><circle cx="5" cy="18" r="1.800" fill="#fff" stroke="#111"/><circle cx="18.500" cy="18" r="1.800" fill="#fff" stroke="#111"/></svg></button><button class="plain" aria-label="Image"><svg width="28" height="28"><rect x="3" y="3" width="22" height="22" fill="#3fbf3a" stroke="#dfd"/><path d="M4 4h5v5H4zM14 4h5v5h-5zM9 9h5v5H9z" fill="#a8e86a"/><path d="M9 14h5v5H9zM14 9h5v5h-5zM4 19h5v5H4z" fill="#0a5a1a"/><path d="M19 4h5v5h-5zM19 19h5v5h-5z" fill="#3be8b0"/><path d="M19 12h5v5h-5zM14 19h5v5h-5z" fill="#9be83a"/></svg></button></div>
 </div><div class="cap position-relative">Input<svg class="position-absolute" width="9" height="9"><use href="#plus"/></svg></div></div>
 <div class="panel-box"><div class="cells d-flex">
  <div class="colm"><button class="plain" aria-label="Cherry picker"><svg width="28" height="28"><path d="M9 18Q12 8 15 5q4 5 5 14" fill="none" stroke="#6a3a10" stroke-width="1.200"/><path d="M15 4q-7-2-9 7 7 0 9-7z" fill="#6cc020"/><circle cx="8.500" cy="18" r="5" fill="#e01818"/><circle cx="19.500" cy="20" r="5" fill="#d01010"/><circle cx="7" cy="16.500" r="1.200" fill="#fff"/><circle cx="18" cy="18.500" r="1.200" fill="#fff"/></svg></button><button class="plain" aria-label="Tree"><svg width="28" height="28"><use href="#tile"/><path d="M12.500 24l1-10h2l1 10z" fill="#111"/><path d="M14 16l-6-4M14 15l6-4M14 14V5M11 13l-5 2M17 13l6 2M9 12l-1-5M19 11l1-5M14 10l-3-4M14 11l3-5" stroke="#111" stroke-width="1.500" fill="none"/><path d="M4 22h20v2.500H4z" fill="#222"/></svg></button></div>
  <div class="rule"></div>
  <div class="colm"><button class="plain" aria-label="Relay"><svg width="28" height="28"><path d="M5 11h9V7l9 7-9 7v-4H5z" fill="#3a3a3a" stroke="#888" stroke-width="1.200"/></svg></button><button class="plain" aria-label="Stream"><svg width="28" height="28"><path d="M5 11h9V7l9 7-9 7v-4H5z" fill="url(#white)" stroke="#555"/></svg></button></div>
  <div class="rule"></div>
  <div class="colm"><button class="plain" aria-label="Cluster"><svg width="28" height="28"><ellipse cx="11" cy="11" rx="7.500" ry="6" fill="#aaa" stroke="#ddd" transform="rotate(-30 11 11)"/><circle cx="10" cy="11" r="2.500" fill="#333"/><ellipse cx="18" cy="18" rx="6.500" ry="5.500" fill="#e8508f" stroke="#f8d0e0" transform="rotate(-30 18 18)"/><circle cx="17" cy="18" r="2" fill="#fbe"/></svg></button><button class="plain" aria-label="Flask"><svg width="28" height="28"><path d="M11 4h6l-1 1v7l6 10q0 2-2 2H8q-2 0-2-2l6-10V5z" fill="#f4b8d0"/><path d="M9 17h10l3 5q0 2-2 2H8q-2 0-2-2z" fill="#e01868"/></svg></button></div>
 </div><div class="cap position-relative">Util<svg class="position-absolute" width="9" height="9"><use href="#plus"/></svg></div></div>
</div>
<div class="g-bar d-flex align-items-center flex-shrink-0">
 <div class="left-btns d-flex">
 <button class="gb" aria-label="Open"><svg width="16" height="16"><path d="M3 3l6-2 4 2v4H4z" fill="#f4f4e8"/><path d="M2 7h5l1-2h5v9H2z" fill="#57c84c"/></svg></button>
 <button class="gb" aria-label="Save"><svg width="16" height="16"><path d="M1 1h14v14H1z" fill="#1558c8"/><path d="M4 1h8v6H4z" fill="#b8d0f4"/><path d="M4 10h8v5H4z" fill="#ddd"/><path d="M6 11h2v4H6z" fill="#1558c8"/></svg></button>
 </div>
 <span class="vr"></span>
 <div class="zoomer position-relative flex-shrink-0"><select aria-label="Zoom"><option>80%</option></select><svg class="position-absolute" width="16" height="16"><rect width="16" height="16" rx="4" fill="#0a66d8"/><path d="M5 7l3 3 3-3" fill="none" stroke="#fff" stroke-width="1.600"/></svg></div>
 <div class="mid-btns d-flex">
 <button class="gb wide" aria-label="Zoom extents"><svg width="16" height="16"><path d="M2 6V2h4M10 2h4v4M14 10v4h-4M6 14H2v-4" fill="none" stroke="#1a1a1a" stroke-width="2"/><path d="M6 6h4v4H6z" fill="#2a2a2a"/></svg></button>
 <button class="gb wide" aria-label="Preview"><svg width="16" height="16"><path d="M2 8q6-7 12 0-6 6-12 0z" fill="#e8f4f8" stroke="#222"/><circle cx="8" cy="8" r="3" fill="#1a8ab8"/><circle cx="8" cy="8" r="1.300" fill="#000"/></svg></button>
 <button class="gb" aria-label="Sketch"><svg width="16" height="16"><path d="M1 8q0 6 5 6" fill="none" stroke="#111" stroke-width="1.500"/><path d="M14 1L7 7l0 6 7-5z" fill="#e02a1a"/><path d="M7 8l0 5-4 1z" fill="#f0b060"/></svg></button>
 </div>
 <div class="ms-auto d-flex align-items-center pe-2">
  <div class="near-btns d-flex">
  <button class="gb" aria-label="No preview"><svg width="16" height="16"><path d="M2 10l2-6 4-3 4 3 2 6z" fill="url(#ballW)"/><ellipse cx="8" cy="10.500" rx="5.500" ry="4" fill="#222" stroke="#bbb" stroke-width=".7"/></svg></button>
  <button class="gb" aria-label="Wireframe"><svg width="16" height="16" fill="none" stroke="#2c2a30" stroke-width="1.500"><path d="M2 9l6-7 5 1 1 5-6 6-5-1zM5 6l5 5"/></svg></button>
  <button class="gb on" aria-label="Shaded"><svg width="16" height="16"><path d="M1 9l6-7q5-1 8 4l-6 8q-6 1-8-5z" fill="#c81018" stroke="#400"/><ellipse cx="10.500" cy="5" rx="2.500" ry="1.500" fill="#f05050"/></svg></button>
  </div>
  <span class="vr v-far"></span>
  <button class="gb" aria-label="Custom preview"><svg width="16" height="16"><path d="M5 4l5-2 5 3-2 6-6 3-1-4 2-2z" fill="#18a098"/><ellipse cx="11" cy="5" rx="2" ry="1.200" fill="#064a48"/><path d="M1 2l6 3-1 7 6 3" stroke="#222" fill="none"/></svg></button>
  <button class="gb on" aria-label="Selected preview"><svg width="16" height="16"><path d="M1 9l5-3 5 6-3 3q-5 0-7-6z" fill="#eee"/><path d="M6 5l4-4q5 0 5 6l-4 4z" fill="#6ab81c"/><path d="M1 3l12 11" stroke="#111"/></svg></button>
  <button class="gb" aria-label="Document preview"><svg width="16" height="16"><circle cx="8" cy="8" r="6" fill="#f07028"/><path d="M8 2a6 6 0 0 1 0 12z" fill="#eee"/><path d="M5 4q-1 4 0 8" stroke="#ffd0a0" fill="none"/></svg></button>
  <span class="vr v-near"></span>
  <button class="gb wide" aria-label="Sphere"><svg width="16" height="16"><circle cx="8" cy="8" r="5.500" fill="url(#ballL)"/></svg></button>
 </div>
</div>
<div class="g-canvas flex-fill position-relative overflow-hidden">
<svg class="position-absolute top-0 start-0" width="867" height="861" viewBox="1053 167 867 861">
 <path id="sheet" stroke="#bcb8b1" fill="none"/>
 <g class="note"><text x="1054" y="406">econstruct the polygon into parts</text><text x="1380" y="498">Finding the midpoint of the polygon's edge</text><text x="1724" y="499">Set the width of the cut in the edge</text><text x="1588" y="685">Direction from center to midpoint edge</text><text x="1603" y="799">Make the trim areas extend 1mm outside the shape for trim</text><text x="1900" y="610">Cha</text></g>
 <g class="wire">
  <path d="M1053 307C1350 320 1550 385 1742 460L1920 531"/>
  <path d="M1100 445C1210 448 1280 456 1340 467C1400 477 1450 485 1500 497C1580 518 1640 538 1693 555L1903 628"/>
  <path d="M1090 503L1163 527C1273 563 1400 600 1500 614S1650 627 1735 628"/>
  <path d="M1053 541L1191 613C1215 625 1240 637 1265 646C1340 672 1440 699 1590 702"/>
  <path d="M1053 602C1110 611 1150 618 1285 624"/>
  <path d="M1053 645C1250 735 1370 815 1614 820"/><path d="M1053 683C1200 755 1360 839 1614 843"/>
  <path d="M1525 653C1630 653 1630 646 1734 646"/><path d="M1525 653C1580 653 1535 739 1590 739"/>
  <path d="M1683 831C1792 831 1792 658 1901 658"/>
 </g>
 <g fill="none" stroke-width="4"><path d="M1133 459C1428 459 1428 519 1723 519" stroke="url(#wireGreen)"/><path d="M1478 539C1600 539 1600 535 1723 535" stroke="url(#wireGreen3)"/><path d="M1353 636C1538 636 1538 551 1723 551" stroke="url(#wireGreen2)"/><path d="M1838 523L1920 525" stroke="#74ad45"/></g>
 <g class="wire thick">
  <path d="M1133 459C1257 459 1257 539 1381 539"/><path d="M1133 459C1246 459 1064 635 1179 635"/>
  <path d="M1478 539C1606 539 1606 610 1734 610"/><path d="M1478 539C1584 539 1484 721 1590 721"/>
  <path d="M1827 615C1864 615 1864 631 1901 631"/><path d="M1683 707C1770 707 1840 694 1905 668"/><path d="M1267 635C1276 635 1276 646 1285 646"/>
 </g>
 <g class="ports">
  <circle cx="1130" cy="429" r="3"/><circle cx="1130" cy="459" r="3"/><circle cx="1130" cy="489" r="3"/><circle cx="1384" cy="539" r="3"/><circle cx="1475" cy="539" r="3"/><circle cx="1181" cy="635" r="3"/><circle cx="1265" cy="635" r="3"/><circle cx="1287" cy="624" r="3"/><circle cx="1287" cy="646" r="3"/><circle cx="1351" cy="635" r="3"/><circle cx="1522" cy="653" r="3"/><circle cx="1725" cy="519" r="3"/><circle cx="1725" cy="535" r="3"/><circle cx="1725" cy="551" r="3"/><circle cx="1836" cy="523" r="3"/><circle cx="1836" cy="547" r="3"/><circle cx="1736" cy="610" r="3"/><circle cx="1736" cy="628" r="3"/><circle cx="1736" cy="646" r="3"/><circle cx="1825" cy="615" r="3"/><circle cx="1825" cy="642" r="3"/><circle cx="1592" cy="702" r="3"/><circle cx="1592" cy="721" r="3"/><circle cx="1592" cy="739" r="3"/><circle cx="1680" cy="707" r="3"/><circle cx="1680" cy="734" r="3"/><circle cx="1616" cy="820" r="3"/><circle cx="1616" cy="842" r="3"/><circle cx="1680" cy="831" r="3"/><circle cx="1904" cy="631" r="3"/><circle cx="1904" cy="658" r="3"/>
 </g>
 <g class="node-body">
  <rect x="1040.500" y="413" width="89" height="92" rx="2"/><rect x="1384.500" y="503.500" width="90" height="71" rx="2"/><rect x="1182" y="614.500" width="83" height="41" rx="2"/><rect x="1287.500" y="612.500" width="63" height="46" rx="2"/><rect x="1736.500" y="599.500" width="88" height="58" rx="2"/><rect x="1592.500" y="692" width="88" height="58" rx="2"/><rect x="1616.500" y="807.500" width="63" height="48" rx="2"/>
 </g>
 <rect x="1725.500" y="510" width="110" height="50" rx="2" fill="url(#greenFill)" stroke="#2c6a2a"/>
 <rect x="1409" y="644.500" width="113" height="17" rx="2" fill="url(#slateFill)" stroke="#444"/>
 <rect x="1904.500" y="616" width="40" height="57" rx="2" fill="url(#slateFill)" stroke="#444"/>
 <g class="pill">
  <rect x="1070.500" y="414.500" width="19" height="89" rx="2"/><text transform="translate(1083.500 459) rotate(-90)">Deconstruct Brep</text>
  <rect x="1412.500" y="505.500" width="19" height="67" rx="2"/><text transform="translate(1425.500 539) rotate(-90)">Curve Middle</text>
  <rect x="1210.500" y="616.500" width="19" height="37" rx="2"/><text transform="translate(1223.500 635) rotate(-90)">Length</text>
  <rect x="1298.500" y="614.500" width="19" height="42" rx="2"/><text transform="translate(1311.500 635) rotate(-90)">Division</text>
  <rect class="leaf" x="1769.500" y="511.500" width="19" height="47" rx="2"/><text transform="translate(1782.500 535) rotate(-90)">Scale</text>
  <rect x="1770.500" y="601.500" width="19" height="54" rx="2"/><text transform="translate(1783.500 628.500) rotate(-90)">Vector 2Pt</text>
  <rect x="1625.500" y="693.500" width="19" height="55" rx="2"/><text transform="translate(1638.500 720.500) rotate(-90)">Vector 2Pt</text>
  <rect x="1627.500" y="809.500" width="19" height="44" rx="2"/><text transform="translate(1640.500 831.500) rotate(-90)">Addition</text>
  <rect x="1483.500" y="646.500" width="36" height="13" rx="1"/><text class="value" x="1501" y="656">True</text>
 </g>
 <g class="lab">
  <text class="e" x="1068" y="462">rep</text><text x="1091" y="432">Faces</text><text x="1091" y="462">Edges</text><text x="1091" y="492">Vertices</text>
  <text class="e" x="1410" y="543">Curve</text><text x="1434" y="543">Midpoint</text>
  <text class="e" x="1207" y="638">Curve</text><text x="1231" y="638">Length</text>
  <text x="1290" y="627">A</text><text x="1290" y="649">B</text><text x="1319" y="639">Result</text>
  <text x="1415" y="656">Boolean Toggle</text>
  <text class="e" x="1766" y="522">Geometry</text><text class="e" x="1766" y="538">Center</text><text class="e" x="1766" y="554">Factor</text><text x="1791" y="526">Geometry</text><text x="1791" y="550">Transform</text>
  <text class="e" x="1767" y="614">Point A</text><text class="e" x="1767" y="632">Point B</text><text class="e" x="1767" y="650">Unitize</text><text x="1791" y="618">Vector</text><text x="1791" y="645">Length</text>
  <text class="e" x="1623" y="706">Point A</text><text class="e" x="1623" y="724">Point B</text><text class="e" x="1623" y="743">Unitize</text><text x="1647" y="710">Vector</text><text x="1647" y="738">Length</text>
  <text x="1620" y="823">A</text><text x="1620" y="846">B</text><text x="1649" y="835">Result</text><text x="1907" y="662">Am</text>
 </g>
 <path d="M1053 1000.500h6.500v26H1053" fill="url(#white)" stroke="#000"/>
 <path d="M1863 979h7l2 4-3 3z" fill="#000"/><path d="M1868 994a22 22 0 0 1 18-17M1889 978a22 22 0 0 1 22 21" fill="none" stroke="#000" stroke-width="4"/>
 <circle cx="1889.500" cy="999" r="19.500" fill="url(#knob)" stroke="#222" stroke-width="1.500"/><circle cx="1889.500" cy="999" r="18.500" fill="none" stroke="#fff" stroke-width="1.500"/>
 <path d="M1877 984l-2 6h3zM1901 983l-5 2 4 3zM1902 1009l5-2-3 6zM1875 1013l4-5 2 5z" fill="#fff" stroke="#fff"/>
</svg>
</div>
<footer class="g-status d-flex align-items-center justify-content-between flex-shrink-0"><span>...</span><span>1.0.0007</span></footer>
</section>
</main>
<script>
// Ruled lines, each snapped to a whole device pixel
function rule(id, x0, sx, x1, y0, sy, y1, left, top){
  let d='';
  for(let x=x0;x<x1;x+=sx) d+='M'+(Math.round(x)+.5)+' '+top+'V'+(Math.max(y0,y1)+.5);
  for(let y=y0;sy<0?y>y1:y<y1;y+=sy) d+='M'+left+' '+(Math.round(y)+.5)+'H'+x1;
  document.getElementById(id).setAttribute('d',d);
}
rule('minor',210,5.36,1080,924,-5.36,130,210,130);
rule('major',210,53.6,1080,924,-53.6,130,210,130);
rule('sheet',1100,119.6,1920,200,39.87,1028,1053,167);
</script>
</body>
</html>
